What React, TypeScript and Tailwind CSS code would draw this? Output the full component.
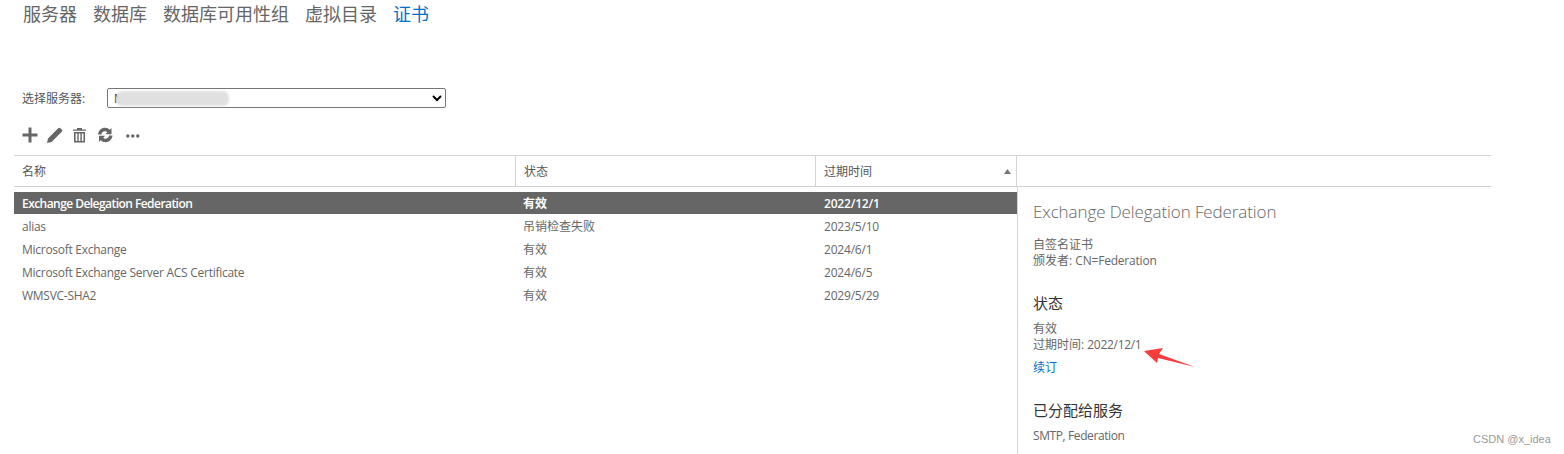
const font = { fontFamily: '"Open Sans","Noto Sans CJK SC",sans-serif' };

const rows = [
  { name: "Exchange Delegation Federation", status: "有效", date: "2022/12/1", selected: true },
  { name: "alias", status: "吊销检查失败", date: "2023/5/10" },
  { name: "Microsoft Exchange", status: "有效", date: "2024/6/1" },
  { name: "Microsoft Exchange Server ACS Certificate", status: "有效", date: "2024/6/5" },
  { name: "WMSVC-SHA2", status: "有效", date: "2029/5/29" },
];

const tabs = ["服务器", "数据库", "数据库可用性组", "虚拟目录"];

function Toolbar() {
  return (
    <svg width="124" height="18" viewBox="0 0 124 18" fill="#666666" className="block">
      <path d="M6.5 1.5h3v6h6v3h-6v6h-3v-6h-6v-3h6z" />
      <path d="M25 17l1-4.600 10.200-10.200c.7-.7 1.600-.7 2.200 0l1.400 1.400c.6.6.6 1.500 0 2.200L29.600 16l-4.600 1zM37.200 6.200l-1.700-1.700 1.300-1.100 1.600 1.600z" />
      <path fillRule="evenodd" d="M51 3.600h4V2h5v1.600h4v1.100H51zM52 6h11v10.500H52zM53.600 7.400v7.700h1.700V7.400zM56.700 7.400v7.700h1.700V7.400zM59.800 7.400v7.700h1.700V7.400z" />
      <path d="M76 8.400c.4-4 3.400-6.700 7-6.700 1.900 0 3.600.8 4.800 2l1.700-1.700v6.200h-6.200l2-2c-.7-.7-1.500-1-2.400-1-1.800 0-3.100 1.200-3.500 3.200zM90.500 9.600c-.4 4-3.400 6.700-7 6.700-1.900 0-3.600-.8-4.800-2L77 16V9.800h6.200l-2 2c.7.7 1.500 1 2.400 1 1.800 0 3.100-1.200 3.500-3.200z" />
      <circle cx="105.800" cy="10" r="1.700" />
      <circle cx="110.800" cy="10" r="1.700" />
      <circle cx="115.800" cy="10" r="1.700" />
    </svg>
  );
}

function Row({ name, status, date, selected }: { name: string; status: string; date: string; selected?: boolean }) {
  return (
    <div
      className={
        selected
          ? "mb-[1px] flex h-[22px] items-center bg-[#666666] pt-[1px] text-[12px] font-semibold text-white"
          : "flex h-[23px] items-center text-[12px] text-[#666666]"
      }
    >
      <div className={selected ? "w-[501px] truncate pl-2 tracking-[-0.55px]" : "w-[501px] truncate pl-2 tracking-[-0.27px]"}>{name}</div>
      <div className="w-[300px] pl-[8px]">{status}</div>
      <div className="pl-[9px] tracking-[-0.2px]">{date}</div>
    </div>
  );
}

export default function App() {
  return (
    <div className="relative h-[454px] w-[1564px] overflow-hidden bg-white" style={font}>
      <nav className="flex gap-4 pl-[23px] pt-[2px] text-[18px] leading-[25px] text-[#666666]">
        {tabs.map((t) => (
          <span key={t}>{t}</span>
        ))}
        <span className="text-[#0072c6]">证书</span>
      </nav>

      <div className="mt-[61px] flex h-[20px] items-center pl-[22px] text-[12px] text-[#555555]">
        <label className="w-[85px] pt-[1px]">选择服务器:</label>
        <div className="relative">
          <select className="block h-[20px] w-[339px] rounded-[2px] border border-[#767676] bg-white pl-[2px] text-[12px] text-black">
            <option>M</option>
          </select>
          <div className="absolute left-[9px] top-[3px] h-[15px] w-[113px] rounded-[6px] bg-[#e0e0e0] blur-[1px]" />
        </div>
      </div>

      <div className="mt-[18px] pl-[22px]">
        <Toolbar />
      </div>

      <div className="ml-[14px] mt-[11px] w-[1477px] border-t border-[#d3d6d8]">
        <div className="flex h-[31px] border-b border-[#ccd1d5] text-[12px] text-[#555555]">
          <div className="flex w-[502px] items-center border-r border-[#d3d6d8] pl-2 pt-[1px]">名称</div>
          <div className="flex w-[300px] items-center border-r border-[#d3d6d8] pl-2 pt-[1px]">状态</div>
          <div className="flex w-[201px] items-center justify-between border-r border-[#d3d6d8] pl-2 pr-[5px] pt-[1px]">
            <span>过期时间</span>
            <svg width="7" height="5" viewBox="0 0 7 5" fill="#777777">
              <path d="M3.5 0L7 5H0z" />
            </svg>
          </div>
        </div>

        <div className="flex">
          <div className="w-[1003px] pt-[5px]">
            {rows.map((r) => (
              <Row key={r.name} {...r} />
            ))}
          </div>
          <aside className="h-[270px] flex-1 border-l border-[#d3d6d8] pl-[15px] text-[12px] leading-[16px] text-[#666666]">
            <h2 className="mt-[14px] text-[17px] font-light leading-[22px] tracking-[-0.1px]">Exchange Delegation Federation</h2>
            <p className="mt-[14px]">自签名证书</p>
            <p>
              颁发者: <span className="tracking-[-0.2px]">CN=Federation</span>
            </p>
            <h3 className="mt-[24px] text-[15px] leading-[20px] text-[#333333]">状态</h3>
            <p className="mt-[8px]">有效</p>
            <p>
              过期时间: <span className="tracking-[-0.3px]">2022/12/1</span>
            </p>
            <p className="mt-[7px] text-[#0072c6]">续订</p>
            <h3 className="mt-[24px] text-[15px] leading-[20px] text-[#333333]">已分配给服务</h3>
            <p className="mt-[8px] tracking-[-0.4px]">SMTP, Federation</p>
          </aside>
        </div>
      </div>

      <svg className="absolute left-0 top-0" width="1564" height="454" viewBox="0 0 1564 454" fill="#f63c3c">
        <polygon points="1144,351 1163,348 1159,354 1195,367 1158,358 1157,363" />
      </svg>
      <span className="absolute left-[1473px] top-[431px] text-[11px] leading-[16px] text-[#9a9a9a]" style={{ fontFamily: '"Liberation Sans",sans-serif' }}>
        CSDN @x_idea
      </span>
    </div>
  );
}
